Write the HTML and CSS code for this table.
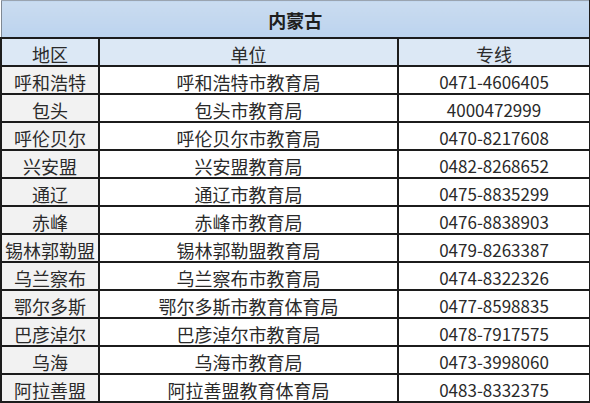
FILE: index.html
```html
<!DOCTYPE html>
<html lang="zh">
<head>
<meta charset="utf-8">
<link rel="stylesheet" href="styles.css">
</head>
<body>
<table class="contacts">
  <colgroup>
    <col class="c-region">
    <col class="c-unit">
    <col class="c-phone">
  </colgroup>
  <thead>
    <tr class="title-row"><th colspan="3">内蒙古</th></tr>
    <tr class="head-row"><th>地区</th><th>单位</th><th>专线</th></tr>
  </thead>
  <tbody>
    <tr><td class="region">呼和浩特</td><td>呼和浩特市教育局</td><td class="phone">0471-4606405</td></tr>
    <tr><td class="region">包头</td><td>包头市教育局</td><td class="phone">4000472999</td></tr>
    <tr><td class="region">呼伦贝尔</td><td>呼伦贝尔市教育局</td><td class="phone">0470-8217608</td></tr>
    <tr><td class="region">兴安盟</td><td>兴安盟教育局</td><td class="phone">0482-8268652</td></tr>
    <tr><td class="region">通辽</td><td>通辽市教育局</td><td class="phone">0475-8835299</td></tr>
    <tr><td class="region">赤峰</td><td>赤峰市教育局</td><td class="phone">0476-8838903</td></tr>
    <tr><td class="region">锡林郭勒盟</td><td>锡林郭勒盟教育局</td><td class="phone">0479-8263387</td></tr>
    <tr><td class="region">乌兰察布</td><td>乌兰察布市教育局</td><td class="phone">0474-8322326</td></tr>
    <tr><td class="region">鄂尔多斯</td><td>鄂尔多斯市教育体育局</td><td class="phone">0477-8598835</td></tr>
    <tr><td class="region">巴彦淖尔</td><td>巴彦淖尔市教育局</td><td class="phone">0478-7917575</td></tr>
    <tr><td class="region">乌海</td><td>乌海市教育局</td><td class="phone">0473-3998060</td></tr>
    <tr><td class="region">阿拉善盟</td><td>阿拉善盟教育体育局</td><td class="phone">0483-8332375</td></tr>
  </tbody>
</table>
</body>
</html>
```
FILE: styles.css
```css
html, body {
  margin: 0;
  padding: 0;
  background: #ffffff;
}
body {
  font-family: "Noto Sans CJK SC", "Noto Sans", sans-serif;
  color: #2a2a2a;
}
.contacts {
  width: 589px;
  border-collapse: collapse;
  table-layout: fixed;
}
.c-region { width: 98px; }
.c-unit { width: 299px; }
.c-phone { width: 192px; }
.contacts th,
.contacts td {
  border: 2px solid #1c1c1c;
  padding: 3px 0 0 0;
  text-align: center;
  vertical-align: middle;
  font-size: 18px;
  font-weight: normal;
  line-height: 20px;
  white-space: nowrap;
}
.title-row th {
  height: 34px;
  padding-top: 2px;
  background: linear-gradient(to bottom, #cadcf0, #bcd3ee);
  border-top: 1px solid #9aa4b0;
  border-left: 1px solid #7f8893;
  font-weight: bold;
  font-size: 18px;
  color: #1e1e1e;
}
.head-row th {
  height: 23px;
  background: #dce8f5;
}
.contacts td {
  height: 23px;
  background: #ffffff;
}
.contacts td.region {
  background: #f2f2f2;
}
.contacts td.phone {
  font-size: 17px;
}
```
